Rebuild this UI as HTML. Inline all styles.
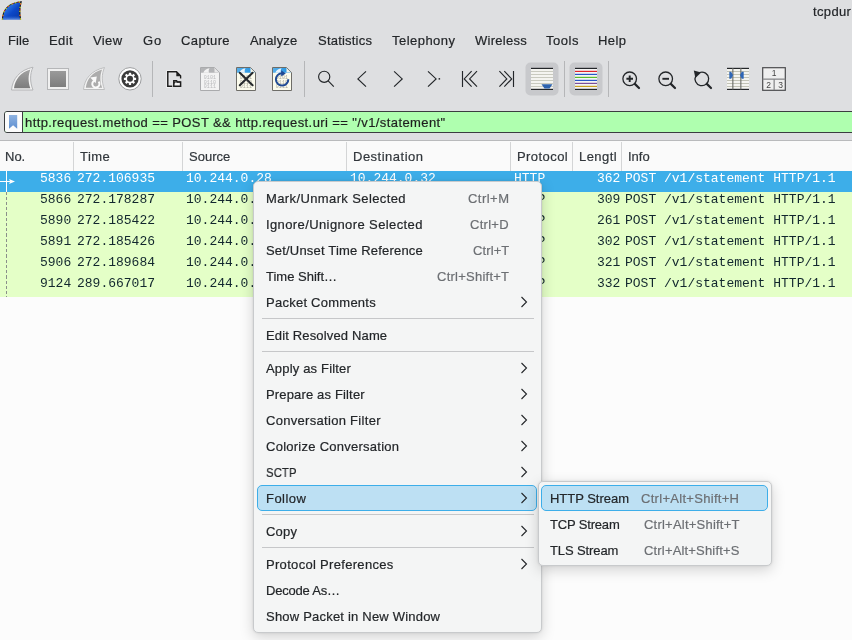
<!DOCTYPE html>
<html><head><meta charset="utf-8">
<style>
*{margin:0;padding:0;box-sizing:border-box}
html,body{width:852px;height:640px;overflow:hidden}
body{position:relative;background:#dedfe1;font-family:"Liberation Sans",sans-serif;font-size:13px;color:#232629}
.a{position:absolute}
.t,.it,.sc{will-change:transform;-webkit-text-stroke:0.2px currentColor}
.t{position:absolute;white-space:nowrap;line-height:16px}
.m{font-family:"Liberation Mono",monospace;font-size:13px;color:#12272e;-webkit-text-stroke:0}
.hdr{position:absolute;left:0;top:140px;width:852px;height:31px;background:#fafafa;border-top:1px solid #b9babc}
.hdr .d{position:absolute;top:1px;width:1px;height:29px;background:#d4d5d6}
.row{position:absolute;left:0;width:852px;height:21px;background:#e4ffc7}
.menu{position:absolute;background:#f4f5f5;border:1px solid #c8cacc;border-radius:5px;box-shadow:0 4px 14px rgba(0,0,0,0.17),0 0 3px rgba(0,0,0,0.10)}
.it{position:absolute;white-space:nowrap;line-height:16px;color:#232629}
.sc{position:absolute;white-space:nowrap;line-height:16px;color:#6c6f73;text-align:right}
.hl{position:absolute;background:#bde0f3;border:1px solid #3daee9;border-radius:5px}
</style></head><body>
<svg class="a" style="left:0px;top:0px" width="24" height="22" viewBox="0 0 24 22">
  <defs><linearGradient id="fin" x1="0" y1="0" x2="1" y2="1"><stop offset="0" stop-color="#4aa0ff"/><stop offset="0.55" stop-color="#0c48c8"/><stop offset="1" stop-color="#0636a0"/></linearGradient>
  <linearGradient id="fin2" x1="0" y1="0" x2="0" y2="1"><stop offset="0" stop-color="#0c48c8" stop-opacity="0"/><stop offset="1" stop-color="#6a9ae8"/></linearGradient></defs>
  <path d="M2.4 19.8 C2.6 11 7.5 2.8 21.2 1.8 C19.6 7 19.6 14 20.6 19.6 C14 19.4 8 19.4 2.4 19.8 Z" fill="url(#fin)"/>
  <path d="M3 16 C9 15 15 15 20.3 16 V19.6 C14 19.4 8 19.4 2.6 19.8 Z" fill="url(#fin2)"/>
  <path d="M2.4 19.8 C2.6 11 7.5 2.8 21.2 1.8 C19.6 7 19.6 14 20.6 19.6" fill="none" stroke="#1b1b1b" stroke-width="1.1"/>
  <path d="M2.4 19.8 C2.6 11 7.5 2.8 21.2 1.8 C19.6 7 19.6 14 20.6 19.6" fill="none" stroke="#e8f020" stroke-width="1.1" stroke-dasharray="1.2 2.6"/>
  <path d="M2.4 19.8 C2.6 11 7.5 2.8 21.2 1.8 C19.6 7 19.6 14 20.6 19.6" fill="none" stroke="#f02828" stroke-width="1.1" stroke-dasharray="1 4.5" stroke-dashoffset="2"/>
</svg>
<div class="t" style="left:813px;top:4px;letter-spacing:0.35px">tcpdur</div>
<div class="t" style="left:8px;top:33px;letter-spacing:0.084px">File</div>
<div class="t" style="left:49px;top:33px;letter-spacing:0.366px">Edit</div>
<div class="t" style="left:93px;top:33px;letter-spacing:0.386px">View</div>
<div class="t" style="left:143px;top:33px;letter-spacing:0.958px">Go</div>
<div class="t" style="left:181px;top:33px;letter-spacing:0.392px">Capture</div>
<div class="t" style="left:250px;top:33px;letter-spacing:0.158px">Analyze</div>
<div class="t" style="left:318px;top:33px;letter-spacing:0.21px">Statistics</div>
<div class="t" style="left:392px;top:33px;letter-spacing:0.466px">Telephony</div>
<div class="t" style="left:475px;top:33px;letter-spacing:0.266px">Wireless</div>
<div class="t" style="left:546px;top:33px;letter-spacing:0.538px">Tools</div>
<div class="t" style="left:598px;top:33px;letter-spacing:0.455px">Help</div>
<svg class="a" style="left:0;top:0" width="852" height="110" viewBox="0 0 852 110">
<defs>
 <linearGradient id="gfin" x1="0" y1="0" x2="0" y2="1"><stop offset="0" stop-color="#a3a3a3"/><stop offset="1" stop-color="#7c7c7c"/></linearGradient>
 <linearGradient id="gsq" x1="0" y1="0" x2="0" y2="1"><stop offset="0" stop-color="#9a9a9a"/><stop offset="1" stop-color="#7d7d7d"/></linearGradient>
 <linearGradient id="gblue" x1="0" y1="0" x2="1" y2="0"><stop offset="0" stop-color="#58b0ea"/><stop offset="1" stop-color="#1d8fe0"/></linearGradient>
</defs>
<!-- start capture fin -->
<path d="M11.5 90 C12.5 79 19.5 70 33 67.2 C29.8 73.8 29.8 82 33 90 Z" fill="#f4f4f4" stroke="#b3b4b6" stroke-width="1"/>
<path d="M14 88.2 C15 79.5 20.8 72 30.4 69.4 C28 75 28 82 30.4 88.2 Z" fill="url(#gfin)"/>
<!-- stop -->
<rect x="47.5" y="68.5" width="21" height="21" fill="#f0f0f0" stroke="#b5b6b8" stroke-width="1"/>
<rect x="50" y="71" width="16" height="16" fill="url(#gsq)"/>
<!-- restart fin -->
<path d="M83.5 89.5 C84.5 79 91 70.5 104.5 67.5 C101.5 74 101.5 82 104.5 89.5 Z" fill="#f3f3f3" stroke="#bdbebf" stroke-width="1"/>
<path d="M85.8 87.8 C86.8 79.5 92 72.2 102.2 69.6 C99.8 75 99.8 82 102.2 87.8 Z" fill="#acacac"/>
<path d="M94.6 80.6 A3.6 3.6 0 1 0 98.6 81.6" fill="none" stroke="#fafafa" stroke-width="2"/>
<path d="M90.2 77.4 L96.8 76.6 L95.6 83.2 Z" fill="#fafafa"/>
<!-- options gear -->
<circle cx="130" cy="78.8" r="11.2" fill="#ffffff" stroke="#9c9d9f" stroke-width="1"/>
<circle cx="130" cy="78.8" r="8.6" fill="#3b3b3b"/>
<g transform="translate(130 78.8)" fill="#ffffff">
 <circle r="4.6"/>
 <rect x="-1.15" y="-6.1" width="2.3" height="12.2" rx="0.4"/>
 <rect x="-1.15" y="-6.1" width="2.3" height="12.2" rx="0.4" transform="rotate(45)"/>
 <rect x="-1.15" y="-6.1" width="2.3" height="12.2" rx="0.4" transform="rotate(90)"/>
 <rect x="-1.15" y="-6.1" width="2.3" height="12.2" rx="0.4" transform="rotate(135)"/>
</g>
<circle cx="130" cy="78.8" r="3" fill="#3b3b3b"/>
<rect x="152" y="61" width="1" height="36" fill="#b5b6b8"/>
<!-- open file -->
<path d="M172.3 86.5 H167.8 V71.8 H176.5 L180.6 75.9 V78.6" fill="none" stroke="#ffffff" stroke-width="3" opacity="0.6"/>
<path d="M172.3 86.2 H167.8 V71.8 H176.5 L180.6 75.9 V78.6" fill="none" stroke="#1e1e1e" stroke-width="1.5"/>
<path d="M176.3 71.5 L181 76.2 H176.3 Z" fill="#1e1e1e"/>
<path d="M173.8 86.2 V80.8 H176.5 L177.5 82 H180.6 V86.2 Z" fill="#f2f2f2" stroke="#1e1e1e" stroke-width="1.5"/>
<path d="M173.8 83.5 L175 82 H180.6" fill="none" stroke="#1e1e1e" stroke-width="1.2"/>
<!-- binary file (disabled) -->
<path d="M200.5 67.5 H214.5 L219.5 72.5 V90.5 H200.5 Z" fill="#f3f3f3" stroke="#aaabad" stroke-width="1"/>
<path d="M201 68 H214.3 L219 72.7 H201 Z" fill="#b4b5b7"/>
<path d="M203.3 72.7 C204.3 70.2 206.3 68.6 209.6 68.2 C208.6 69.6 208.4 71.3 209.1 72.7 Z" fill="#f3f3f3"/>
<path d="M214.5 68 L219 72.5 H214.5 Z" fill="#e8e8e8"/>
<g font-family="Liberation Mono" font-size="5" fill="#b9babc" letter-spacing="0.05"><text x="203.8" y="79">0101</text><text x="203.8" y="83.5">0110</text><text x="203.8" y="88">0111</text></g>
<!-- close file -->
<path d="M236.5 67.5 H250.5 L255.5 72.5 V90.5 H236.5 Z" fill="#fbfbec" stroke="#6e6d68" stroke-width="1"/>
<path d="M237 68 H250.3 L255 72.7 H237 Z" fill="url(#gblue)"/>
<path d="M239.3 72.7 C240.3 70.2 242.3 68.6 245.6 68.2 C244.6 69.6 244.4 71.3 245.1 72.7 Z" fill="#e9f4fb"/>
<path d="M250.5 68 L255 72.5 H250.5 Z" fill="#f4f4e8"/>
<g font-family="Liberation Mono" font-size="5" fill="#a9a99c" letter-spacing="0.05"><text x="239.8" y="79">0101</text><text x="239.8" y="83.5">0110</text><text x="239.8" y="88">0111</text></g>
<path d="M239.8 72.8 L252.6 85.2 M252.6 72.8 L239.8 85.2" stroke="#26292c" stroke-width="2.1" stroke-linecap="round"/>
<!-- reload file -->
<path d="M272.5 67.5 H286.5 L291.5 72.5 V90.5 H272.5 Z" fill="#fbfbec" stroke="#6e6d68" stroke-width="1"/>
<path d="M273 68 H286.3 L291 72.7 H273 Z" fill="url(#gblue)"/>
<path d="M275.3 72.7 C276.3 70.2 278.3 68.6 281.6 68.2 C280.6 69.6 280.4 71.3 281.1 72.7 Z" fill="#e9f4fb"/>
<path d="M286.5 68 L291 72.5 H286.5 Z" fill="#f4f4e8"/>
<g font-family="Liberation Mono" font-size="5" fill="#a9a99c" letter-spacing="0.05"><text x="275.8" y="79">0101</text><text x="275.8" y="83.5">0110</text><text x="275.8" y="88">0111</text></g>
<path d="M288.3 79.2 A6.2 6.2 0 1 1 282 73.2" fill="none" stroke="#1f4a94" stroke-width="2"/>
<path d="M281.2 70.2 L285.8 73.6 L281.2 76.6 Z" fill="#1f4a94"/>
<rect x="304" y="61" width="1" height="36" fill="#b5b6b8"/>
<!-- nav icons -->
<g fill="none" stroke="#232629" stroke-width="1.15" stroke-linecap="butt">
 <circle cx="324.2" cy="76.8" r="5.6"/>
 <path d="M328.2 80.8 L333.8 86.6"/>
 <path d="M366 71.4 L357.9 78.9 L366 86.6"/>
 <path d="M394.1 71.4 L402.2 78.9 L394.1 86.6"/>
 <path d="M428 71.4 L436.1 78.9 L428 86.6"/>
 <path d="M462.5 71 V87"/>
 <path d="M471.6 71.2 L464.2 78.9 L471.6 86.7"/>
 <path d="M477 71.2 L469.6 78.9 L477 86.7"/>
 <path d="M513.5 71 V87"/>
 <path d="M499.4 71.2 L506.8 78.9 L499.4 86.7"/>
 <path d="M504.3 71.2 L511.7 78.9 L504.3 86.7"/>
</g>
<rect x="438.6" y="78.1" width="1.5" height="1.5" fill="#232629"/>
<!-- autoscroll pressed -->
<rect x="525.5" y="62.5" width="33" height="33" rx="5" fill="#c8c9cc"/>
<rect x="531" y="68" width="22" height="21.5" fill="#f4f4f0"/>
<g fill="#c9cabf"><rect x="531" y="71" width="22" height="1"/><rect x="531" y="74" width="22" height="1"/><rect x="531" y="77" width="22" height="1"/><rect x="531" y="80" width="22" height="1"/><rect x="531" y="83" width="22" height="1"/><rect x="531" y="86" width="22" height="1"/></g>
<rect x="531" y="67.8" width="22" height="1.2" fill="#232629"/>
<rect x="531" y="88.8" width="22" height="1.2" fill="#232629"/>
<path d="M541.5 84.3 H552.5 L549.5 88.6 H544.5 Z" fill="#2d62ae"/>
<rect x="564" y="61" width="1" height="36" fill="#b5b6b8"/>
<!-- colorize pressed -->
<rect x="569.5" y="62.5" width="33" height="33" rx="5" fill="#c8c9cc"/>
<rect x="575" y="68" width="22" height="21.5" fill="#f4f4f4"/>
<rect x="575" y="67.8" width="22" height="1.2" fill="#232629"/>
<rect x="575" y="70.8" width="22" height="1.2" fill="#e0242a"/>
<rect x="575" y="73.8" width="22" height="1.2" fill="#2a56c6"/>
<rect x="575" y="76.8" width="22" height="1.2" fill="#5bbd2a"/>
<rect x="575" y="79.8" width="22" height="1.2" fill="#2a56c6"/>
<rect x="575" y="82.8" width="22" height="1.2" fill="#7a4c9a"/>
<rect x="575" y="85.8" width="22" height="1.2" fill="#c9a021"/>
<rect x="575" y="88.8" width="22" height="1.2" fill="#232629"/>
<rect x="608" y="61" width="1" height="36" fill="#b5b6b8"/>
<!-- zoom in/out/reset -->
<g fill="none" stroke="#232629" stroke-width="1.3">
 <circle cx="629.7" cy="78.8" r="6.8"/>
 <circle cx="665.7" cy="78.8" r="6.8"/>
 <path d="M695.9 75.6 A6.8 6.8 0 1 0 699.5 72.5"/>
</g>
<g stroke="#232629" stroke-width="2.2" stroke-linecap="round">
 <path d="M634.8 83.9 L639 88"/>
 <path d="M670.8 83.9 L675 88"/>
 <path d="M706.8 83.9 L711 88"/>
 <path d="M626.4 78.8 H633 M629.7 75.5 V82.1" stroke-linecap="butt" stroke-width="1.9"/>
 <path d="M662.4 78.8 H669" stroke-linecap="butt" stroke-width="1.9"/>
</g>
<path d="M693.8 70.6 L701.2 72.4 L695.4 78 Z" fill="#232629"/>
<!-- resize columns -->
<rect x="727" y="68" width="22" height="21.5" fill="#f4f4f0"/>
<g fill="#c2c3b6"><rect x="727" y="71" width="22" height="1"/><rect x="727" y="74" width="22" height="1"/><rect x="727" y="77" width="22" height="1"/><rect x="727" y="80" width="22" height="1"/><rect x="727" y="83" width="22" height="1"/><rect x="727" y="86" width="22" height="1"/></g>
<rect x="727" y="67.8" width="22" height="1.2" fill="#232629"/>
<rect x="727" y="88.8" width="22" height="1.2" fill="#232629"/>
<rect x="732.3" y="68" width="1.1" height="21.5" fill="#6a6b66"/>
<rect x="740.3" y="68" width="1.1" height="21.5" fill="#6a6b66"/>
<path d="M729.3 71.8 H731.2 L733 75.3 L731.2 78.8 H729.3 Z" fill="#2e66b6"/>
<path d="M743.7 71.8 H741.8 L740 75.3 L741.8 78.8 H743.7 Z" fill="#2e66b6"/>
<!-- layout -->
<rect x="762.7" y="67.7" width="22.6" height="22.6" fill="#efefef" stroke="#4a4b4d" stroke-width="1.2"/>
<rect x="762.7" y="78.5" width="22.6" height="1.3" fill="#8a8b8d"/>
<rect x="773.5" y="79" width="1.3" height="11" fill="#8a8b8d"/>
</svg>
<div class="a" style="left:769px;top:68px;width:10px;text-align:center;font-size:8.5px;line-height:10px;color:#444">1</div>
<div class="a" style="left:764px;top:80px;width:9px;text-align:center;font-size:8.5px;line-height:10px;color:#444">2</div>
<div class="a" style="left:776px;top:80px;width:9px;text-align:center;font-size:8.5px;line-height:10px;color:#444">3</div>

<div class="a" style="left:4px;top:111px;width:860px;height:22px;border:1px solid #3b3d40;border-radius:3px;background:#afffaf"></div>
<div class="a" style="left:5px;top:112px;width:18px;height:20px;background:#fcfcfc;border-right:1px solid #3b3d40;border-radius:2px 0 0 2px"></div>
<svg class="a" style="left:8px;top:114px" width="12" height="16" viewBox="0 0 12 16"><defs><linearGradient id="bm" x1="0" y1="0" x2="0" y2="1"><stop offset="0" stop-color="#8fb3e2"/><stop offset="1" stop-color="#5f8fd0"/></linearGradient></defs><path d="M1 1H9.2V14.7L5.1 11.2L1 14.7Z" fill="url(#bm)"/></svg>
<div class="t" style="left:25px;top:115px;color:#1f1f1f;letter-spacing:0.4px">http.request.method == POST &amp;&amp; http.request.uri == "/v1/statement"</div>
<div class="a" style="left:0;top:140px;width:852px;height:500px;background:#fcfcfc"></div>
<div class="hdr">
<div class="d" style="left:73px"></div>
<div class="d" style="left:182px"></div>
<div class="d" style="left:346px"></div>
<div class="d" style="left:510px"></div>
<div class="d" style="left:572px"></div>
<div class="d" style="left:621px"></div>
<div class="t" style="left:5px;top:8px;color:#31363b;letter-spacing:0px">No.</div>
<div class="t" style="left:80px;top:8px;color:#31363b;letter-spacing:0.465px">Time</div>
<div class="t" style="left:189px;top:8px;color:#31363b;letter-spacing:0px">Source</div>
<div class="t" style="left:353px;top:8px;color:#31363b;letter-spacing:0.496px">Destination</div>
<div class="t" style="left:517px;top:8px;color:#31363b;letter-spacing:0.43px">Protocol</div>
<div class="t" style="left:579px;top:8px;color:#31363b;letter-spacing:0.436px">Lengtl</div>
<div class="t" style="left:628px;top:8px;color:#31363b;letter-spacing:0px">Info</div>
</div>
<div class="row" style="top:171px;background:#3daee9;color:#ffffff">
<div class="t m" style="right:781px;top:0px;color:#ffffff">5836</div>
<div class="t m" style="left:77px;top:0px;color:#ffffff">272.106935</div>
<div class="t m" style="left:186px;top:0px;color:#ffffff">10.244.0.28</div>
<div class="t m" style="left:350px;top:0px;color:#ffffff">10.244.0.32</div>
<div class="t m" style="left:514px;top:0px;color:#ffffff">HTTP</div>
<div class="t m" style="right:232px;top:0px;color:#ffffff">362</div>
<div class="t m" style="left:625px;top:0px;color:#ffffff">POST /v1/statement HTTP/1.1</div>
<div class="a" style="left:6px;top:0;width:1px;height:21px;background:#fff"></div>
<svg class="a" style="left:0;top:5px" width="16" height="10" viewBox="0 0 16 10"><path d="M0 5.5H10" stroke="#fff" stroke-width="1"/><path d="M9 2.9L15 5.5L9 8.1L10.2 5.5Z" fill="#fff"/></svg>
</div>
<div class="row" style="top:192px;background:#e4ffc7;color:#12272e">
<div class="t m" style="right:781px;top:0px;color:#12272e">5866</div>
<div class="t m" style="left:77px;top:0px;color:#12272e">272.178287</div>
<div class="t m" style="left:186px;top:0px;color:#12272e">10.244.0.28</div>
<div class="t m" style="left:350px;top:0px;color:#12272e">10.244.0.32</div>
<div class="t m" style="left:514px;top:0px;color:#12272e">HTTP</div>
<div class="t m" style="right:232px;top:0px;color:#12272e">309</div>
<div class="t m" style="left:625px;top:0px;color:#12272e">POST /v1/statement HTTP/1.1</div>
<div class="a" style="left:6px;top:0;width:1px;height:21px;background:repeating-linear-gradient(#8a8f8a 0 3px,transparent 3px 5px)"></div>
</div>
<div class="row" style="top:213px;background:#e4ffc7;color:#12272e">
<div class="t m" style="right:781px;top:0px;color:#12272e">5890</div>
<div class="t m" style="left:77px;top:0px;color:#12272e">272.185422</div>
<div class="t m" style="left:186px;top:0px;color:#12272e">10.244.0.28</div>
<div class="t m" style="left:350px;top:0px;color:#12272e">10.244.0.32</div>
<div class="t m" style="left:514px;top:0px;color:#12272e">HTTP</div>
<div class="t m" style="right:232px;top:0px;color:#12272e">261</div>
<div class="t m" style="left:625px;top:0px;color:#12272e">POST /v1/statement HTTP/1.1</div>
<div class="a" style="left:6px;top:0;width:1px;height:21px;background:repeating-linear-gradient(#8a8f8a 0 3px,transparent 3px 5px)"></div>
</div>
<div class="row" style="top:234px;background:#e4ffc7;color:#12272e">
<div class="t m" style="right:781px;top:0px;color:#12272e">5891</div>
<div class="t m" style="left:77px;top:0px;color:#12272e">272.185426</div>
<div class="t m" style="left:186px;top:0px;color:#12272e">10.244.0.28</div>
<div class="t m" style="left:350px;top:0px;color:#12272e">10.244.0.32</div>
<div class="t m" style="left:514px;top:0px;color:#12272e">HTTP</div>
<div class="t m" style="right:232px;top:0px;color:#12272e">302</div>
<div class="t m" style="left:625px;top:0px;color:#12272e">POST /v1/statement HTTP/1.1</div>
<div class="a" style="left:6px;top:0;width:1px;height:21px;background:repeating-linear-gradient(#8a8f8a 0 3px,transparent 3px 5px)"></div>
</div>
<div class="row" style="top:255px;background:#e4ffc7;color:#12272e">
<div class="t m" style="right:781px;top:0px;color:#12272e">5906</div>
<div class="t m" style="left:77px;top:0px;color:#12272e">272.189684</div>
<div class="t m" style="left:186px;top:0px;color:#12272e">10.244.0.28</div>
<div class="t m" style="left:350px;top:0px;color:#12272e">10.244.0.32</div>
<div class="t m" style="left:514px;top:0px;color:#12272e">HTTP</div>
<div class="t m" style="right:232px;top:0px;color:#12272e">321</div>
<div class="t m" style="left:625px;top:0px;color:#12272e">POST /v1/statement HTTP/1.1</div>
<div class="a" style="left:6px;top:0;width:1px;height:21px;background:repeating-linear-gradient(#8a8f8a 0 3px,transparent 3px 5px)"></div>
</div>
<div class="row" style="top:276px;background:#e4ffc7;color:#12272e">
<div class="t m" style="right:781px;top:0px;color:#12272e">9124</div>
<div class="t m" style="left:77px;top:0px;color:#12272e">289.667017</div>
<div class="t m" style="left:186px;top:0px;color:#12272e">10.244.0.28</div>
<div class="t m" style="left:350px;top:0px;color:#12272e">10.244.0.32</div>
<div class="t m" style="left:514px;top:0px;color:#12272e">HTTP</div>
<div class="t m" style="right:232px;top:0px;color:#12272e">332</div>
<div class="t m" style="left:625px;top:0px;color:#12272e">POST /v1/statement HTTP/1.1</div>
<div class="a" style="left:6px;top:0;width:1px;height:21px;background:repeating-linear-gradient(#8a8f8a 0 3px,transparent 3px 5px)"></div>
</div>
<div class="menu" style="left:253px;top:181px;width:289px;height:452px"></div>
<div class="it" style="left:266px;top:191px;letter-spacing:0.384px">Mark/Unmark Selected</div>
<div class="sc" style="right:342.528px;top:191px;letter-spacing:0.472px">Ctrl+M</div>
<div class="it" style="left:266px;top:217px;letter-spacing:0.39px">Ignore/Unignore Selected</div>
<div class="sc" style="right:342.719px;top:217px;letter-spacing:0.281px">Ctrl+D</div>
<div class="it" style="left:266px;top:243px;letter-spacing:0.187px">Set/Unset Time Reference</div>
<div class="sc" style="right:342.89px;top:243px;letter-spacing:0.11px">Ctrl+T</div>
<div class="it" style="left:266px;top:269px;letter-spacing:-0.003px">Time Shift…</div>
<div class="sc" style="right:342.759px;top:269px;letter-spacing:0.241px">Ctrl+Shift+T</div>
<div class="it" style="left:266px;top:295px;letter-spacing:0.25px">Packet Comments</div>
<svg class="a" style="left:520px;top:296px" width="8" height="12" viewBox="0 0 8 12"><path d="M1.5 1L6.5 6L1.5 11" fill="none" stroke="#232629" stroke-width="1.1"/></svg>
<div class="a" style="left:262px;top:318px;width:272px;height:1px;background:#c6c7c9"></div>
<div class="it" style="left:266px;top:328px;letter-spacing:0.153px">Edit Resolved Name</div>
<div class="a" style="left:262px;top:351px;width:272px;height:1px;background:#c6c7c9"></div>
<div class="it" style="left:266px;top:361px;letter-spacing:0.174px">Apply as Filter</div>
<svg class="a" style="left:520px;top:362px" width="8" height="12" viewBox="0 0 8 12"><path d="M1.5 1L6.5 6L1.5 11" fill="none" stroke="#232629" stroke-width="1.1"/></svg>
<div class="it" style="left:266px;top:387px;letter-spacing:0.157px">Prepare as Filter</div>
<svg class="a" style="left:520px;top:388px" width="8" height="12" viewBox="0 0 8 12"><path d="M1.5 1L6.5 6L1.5 11" fill="none" stroke="#232629" stroke-width="1.1"/></svg>
<div class="it" style="left:266px;top:413px;letter-spacing:0.3px">Conversation Filter</div>
<svg class="a" style="left:520px;top:414px" width="8" height="12" viewBox="0 0 8 12"><path d="M1.5 1L6.5 6L1.5 11" fill="none" stroke="#232629" stroke-width="1.1"/></svg>
<div class="it" style="left:266px;top:439px;letter-spacing:0.26px">Colorize Conversation</div>
<svg class="a" style="left:520px;top:440px" width="8" height="12" viewBox="0 0 8 12"><path d="M1.5 1L6.5 6L1.5 11" fill="none" stroke="#232629" stroke-width="1.1"/></svg>
<div class="it" style="left:266px;top:465px;transform:scaleX(0.879);transform-origin:0 0">SCTP</div>
<svg class="a" style="left:520px;top:466px" width="8" height="12" viewBox="0 0 8 12"><path d="M1.5 1L6.5 6L1.5 11" fill="none" stroke="#232629" stroke-width="1.1"/></svg>
<div class="hl" style="left:257px;top:485px;width:280px;height:26px"></div>
<div class="it" style="left:266px;top:491px;letter-spacing:0.447px">Follow</div>
<svg class="a" style="left:520px;top:492px" width="8" height="12" viewBox="0 0 8 12"><path d="M1.5 1L6.5 6L1.5 11" fill="none" stroke="#232629" stroke-width="1.1"/></svg>
<div class="a" style="left:262px;top:514px;width:272px;height:1px;background:#c6c7c9"></div>
<div class="it" style="left:266px;top:524px;letter-spacing:0.217px">Copy</div>
<svg class="a" style="left:520px;top:525px" width="8" height="12" viewBox="0 0 8 12"><path d="M1.5 1L6.5 6L1.5 11" fill="none" stroke="#232629" stroke-width="1.1"/></svg>
<div class="a" style="left:262px;top:547px;width:272px;height:1px;background:#c6c7c9"></div>
<div class="it" style="left:266px;top:557px;letter-spacing:0.311px">Protocol Preferences</div>
<svg class="a" style="left:520px;top:558px" width="8" height="12" viewBox="0 0 8 12"><path d="M1.5 1L6.5 6L1.5 11" fill="none" stroke="#232629" stroke-width="1.1"/></svg>
<div class="it" style="left:266px;top:583px;letter-spacing:-0.21px">Decode As…</div>
<div class="it" style="left:266px;top:609px;letter-spacing:0.205px">Show Packet in New Window</div>
<div class="menu" style="left:538px;top:481px;width:234px;height:85px"></div>
<div class="hl" style="left:541px;top:485px;width:227px;height:26px"></div>
<div class="it" style="left:550px;top:491px;letter-spacing:-0.025px">HTTP Stream</div>
<div class="sc" style="right:112.704px;top:491px;letter-spacing:0.296px">Ctrl+Alt+Shift+H</div>
<div class="it" style="left:550px;top:517px;letter-spacing:-0.168px">TCP Stream</div>
<div class="sc" style="right:112.781px;top:517px;letter-spacing:0.219px">Ctrl+Alt+Shift+T</div>
<div class="it" style="left:550px;top:543px;letter-spacing:-0.106px">TLS Stream</div>
<div class="sc" style="right:112.83px;top:543px;letter-spacing:0.17px">Ctrl+Alt+Shift+S</div>
</body></html>
